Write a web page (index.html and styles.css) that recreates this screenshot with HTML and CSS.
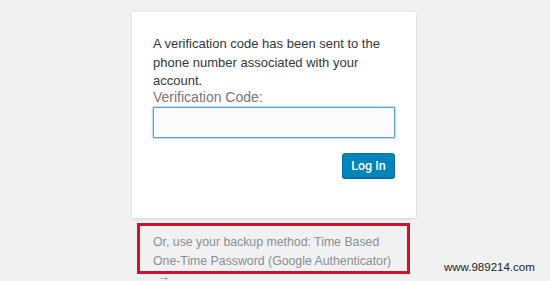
FILE: index.html
```html
<!DOCTYPE html>
<html>
<head>
<meta charset="utf-8">
<link rel="stylesheet" href="styles.css">
</head>
<body>
<div class="wrap">
  <form class="card">
    <p class="msg">A verification code has been sent to the phone number associated with your account.</p>
    <label class="label">Verification Code:</label>
    <input class="code" type="text">
    <div class="actions"><button class="btn" type="button">Log In</button></div>
  </form>
  <div class="backup">
    <p class="backup-text">Or, use your backup method: Time Based One-Time Password (Google Authenticator)</p>
    <span class="arrow">→</span>
  </div>
</div>
<div class="watermark">www.989214.com</div>
</body>
</html>
```
FILE: styles.css
```css
html, body {
  margin: 0;
  padding: 0;
  height: 100%;
  overflow: hidden;
}
body {
  background: #f1f1f1;
  font-family: "Liberation Sans", Arial, sans-serif;
  position: relative;
}
.wrap {
  width: 284px;
  margin-left: 132px;
  padding-top: 12px;
}
.card {
  background: #fff;
  box-shadow: 0 1px 3px rgba(0,0,0,0.13);
  padding: 23px 21px 40px 21px;
  display: flex;
  flex-direction: column;
}
.msg {
  margin: 0;
  font-size: 13px;
  line-height: 18.5px;
  color: #32373c;
}
.label {
  font-size: 14px;
  line-height: 13px;
  margin-top: 0;
  color: #72777c;
}
.code {
  margin: 3px 0 0 0;
  height: 31px;
  box-sizing: border-box;
  border: 1px solid #5b9dd9;
  box-shadow: 0 0 2px rgba(30,140,190,0.8);
  background: #fbfbfb;
  outline: none;
  width: 242px;
}
.actions {
  display: flex;
  justify-content: flex-end;
  margin-top: 15px;
}
.btn {
  font-family: Roboto, "Liberation Sans", Arial, sans-serif;
  font-size: 12.5px;
  font-weight: 500;
  color: #fff;
  background: #0085ba;
  border: 1px solid #0073aa;
  border-radius: 3px;
  box-shadow: 0 1px 0 #006799;
  height: 25px;
  width: 53px;
  padding: 0;
}
.backup {
  margin: 5px 0 0 5px;
  width: 273px;
  height: 51px;
  box-sizing: border-box;
  border: 3px solid #d2102a;
  padding: 7px 0 0 13px;
  position: relative;
}
.backup-text {
  margin: 0;
  font-size: 12.3px;
  line-height: 19px;
  color: #8a8f94;
}
.arrow {
  position: absolute;
  left: 17px;
  top: 43px;
  font-size: 13px;
  line-height: 15px;
  color: #8a8f94;
}
.watermark {
  position: absolute;
  left: 444px;
  top: 261px;
  font-family: "Liberation Sans", Arial, sans-serif;
  font-size: 11.5px;
  color: #222;
}
```
